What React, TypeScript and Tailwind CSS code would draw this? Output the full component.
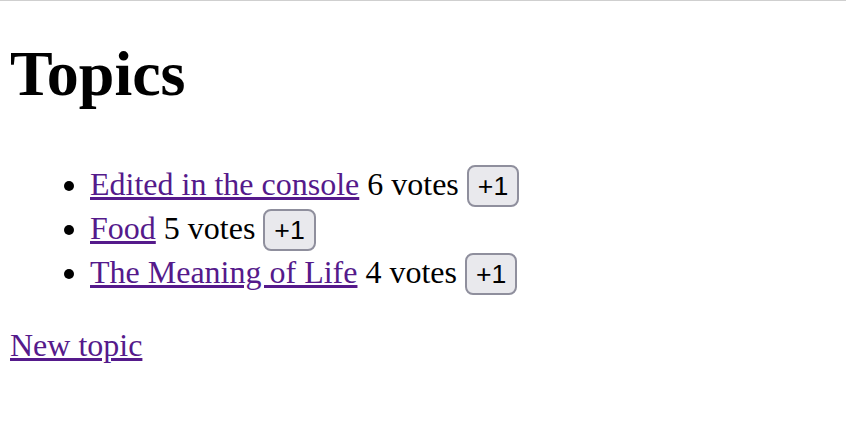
import React from "react";

const topics = [
  { title: "Edited in the console", votes: 6 },
  { title: "Food", votes: 5 },
  { title: "The Meaning of Life", votes: 4 },
];

const App: React.FC = () => {
  return (
    <div className="min-h-[447px] w-full bg-white border-t border-[#cfcfcf] pl-[10px] text-black font-['Liberation_Serif',_'Times_New_Roman',_serif] text-[32px]">
      {/* Heading */}
      <h1 className="mt-[37px] text-[64px] font-bold leading-[71px]">Topics</h1>

      {/* Topic list */}
      <ul className="mt-[56px] list-disc pl-[80px]">
        {topics.map((t) => (
          <li key={t.title} className="h-[44px] leading-[36px]">
            <a href="#" className="text-[#551a8b] underline">
              {t.title}
            </a>{" "}
            {t.votes} votes{" "}
            <button className="h-[42px] rounded-[8px] border-2 border-[#8f8f9d] bg-[#e9e9ed] px-[9px] py-[4px] align-baseline font-['Liberation_Sans',_Arial,_sans-serif] text-[26.67px] leading-[30px] text-black">
              +1
            </button>
          </li>
        ))}
      </ul>

      <p className="mt-[30px] leading-[36px]">
        <a href="#" className="text-[#551a8b] underline">
          New topic
        </a>
      </p>
    </div>
  );
};

export default App;
